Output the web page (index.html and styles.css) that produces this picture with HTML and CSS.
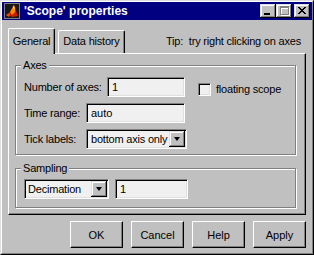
FILE: index.html
```html
<!DOCTYPE html>
<html lang="en">

<head>
    <meta charset="UTF-8">
    <title>'Scope' properties</title>
    <link rel="stylesheet" href="styles.css">
</head>

<body>
    <div class="window">
        <div class="frame">
            <!-- Caption bar -->
            <div class="titlebar">
                <svg class="app-icon" width="16" height="16" viewBox="0 0 16 16">
                    <rect x="0.5" y="0.5" width="15" height="15" fill="#181818" stroke="#808080"/>
                    <polygon points="2,12 6,9 10,2 12,8 14,13 9,14" fill="#c81e00"/>
                    <polygon points="6,9 10,2 11,9 8,12" fill="#ff8a00"/>
                    <polygon points="9,5 10,2 11,7" fill="#ffff40"/>
                    <polygon points="2,12 6,10 5,14" fill="#e85010"/>
                </svg>
                <span class="title">'Scope' properties</span>
                <div class="caption-buttons">
                    <span class="cbtn">
                        <svg width="16" height="14"><rect x="4" y="9" width="6" height="2" fill="#000"/></svg>
                    </span>
                    <span class="cbtn">
                        <svg width="16" height="14">
                            <path d="M5 3h9v9h-9z M6 5v6h7v-6z" fill="#fff" fill-rule="evenodd"/>
                            <path d="M4 2h9v9h-9z M5 4v6h7v-6z" fill="#808080" fill-rule="evenodd"/>
                        </svg>
                    </span>
                    <span class="cbtn close">
                        <svg width="16" height="14">
                            <path d="M4 3h2v1h-2z M10 3h2v1h-2z M5 4h2v1h-2z M9 4h2v1h-2z M6 5h4v1h-4z M7 6h2v1h-2z M6 7h4v1h-4z M5 8h2v1h-2z M9 8h2v1h-2z M4 9h2v1h-2z M10 9h2v1h-2z" fill="#000"/>
                        </svg>
                    </span>
                </div>
            </div>

            <div class="content">
                <div class="tabrow">
                    <div class="tab active">General</div>
                    <div class="tab">Data history</div>
                    <div class="tip">Tip:&nbsp; try right clicking on axes</div>
                </div>

                <div class="panel">
                    <fieldset class="group axes">
                        <legend>Axes</legend>
                        <div class="row">
                            <span class="lbl lbl-num">Number of axes:</span>
                            <input class="edit edit-num" type="text" value="1">
                            <span class="check-item">
                                <span class="check"></span>
                                <span>floating scope</span>
                            </span>
                        </div>
                        <div class="row">
                            <span class="lbl lbl-short">Time range:</span>
                            <input class="edit edit-time" type="text" value="auto">
                        </div>
                        <div class="row">
                            <span class="lbl lbl-short">Tick labels:</span>
                            <div class="combo combo-tick">
                                <span class="combo-text">bottom axis only</span>
                                <span class="arrow"></span>
                            </div>
                        </div>
                    </fieldset>

                    <fieldset class="group sampling">
                        <legend>Sampling</legend>
                        <div class="row">
                            <div class="combo combo-dec">
                                <span class="combo-text">Decimation</span>
                                <span class="arrow"></span>
                            </div>
                            <input class="edit edit-factor" type="text" value="1">
                        </div>
                    </fieldset>
                </div>

                <div class="buttons">
                    <button type="button">OK</button>
                    <button type="button">Cancel</button>
                    <button type="button">Help</button>
                    <button type="button">Apply</button>
                </div>
            </div>
        </div>
    </div>
</body>

</html>
```

FILE: styles.css
```css
/* Global styles */
* {
    padding: 0;
    margin: 0;
    box-sizing: border-box;
}

body {
    font-family: "Liberation Sans", Arial, sans-serif;
    font-size: 11px;
    letter-spacing: -0.2px;
    color: #000;
    background-color: #c0c0c0;
}

/* Window frame */
.window {
    width: 314px;
    height: 255px;
    border: 1px solid;
    border-color: #dfdfdf #000 #000 #dfdfdf;
    background-color: #c0c0c0;
}

.frame {
    height: 100%;
    border: 1px solid;
    border-color: #fff #808080 #808080 #fff;
}

/* Caption bar */
.titlebar {
    height: 18px;
    background-color: #000080;
    color: #fff;
    display: flex;
    align-items: center;
    padding: 0 2px;
}

.app-icon {
    display: block;
}

.title {
    margin-left: 4px;
    font-size: 12px;
    font-weight: bold;
    letter-spacing: 0;
}

.caption-buttons {
    margin-left: auto;
    display: flex;
}

.cbtn {
    width: 16px;
    height: 14px;
    background-color: #c0c0c0;
    box-shadow: inset -1px -1px #000, inset 1px 1px #dfdfdf, inset -2px -2px #808080, inset 2px 2px #fff;
}

.cbtn svg {
    display: block;
}

.cbtn.close {
    margin-left: 2px;
}

/* Dialog body */
.content {
    padding: 0 6px;
}

.tabrow {
    margin-top: 8px;
    height: 25px;
    display: flex;
    align-items: flex-end;
}

.tab {
    text-align: center;
    line-height: 13px;
    border: 1px solid;
    border-bottom: none;
    border-color: #fff #000 #000 #fff;
    border-radius: 2px 2px 0 0;
    box-shadow: inset -1px 0 #808080;
    background-color: #c0c0c0;
}

.tab.active {
    width: 47px;
    height: 26px;
    padding-top: 6px;
    margin-bottom: -1px;
    position: relative;
    z-index: 1;
}

.tab + .tab {
    width: 67px;
    height: 23px;
    padding-top: 4px;
    margin-left: 3px;
}

.tip {
    align-self: flex-start;
    line-height: 13px;
    padding-top: 7px;
    margin-left: auto;
    margin-right: 5px;
}

.panel {
    border: 1px solid;
    border-color: #fff #000 #000 #fff;
    box-shadow: inset -1px -1px #808080;
    padding: 5px 9px 6px 6px;
}

/* Etched group boxes */
.group {
    border: 1px solid #808080;
    box-shadow: inset 1px 1px #fff, 1px 1px #fff;
    padding: 5px 0 5px 8px;
    min-width: 0;
}

.group legend {
    line-height: 13px;
    padding: 0 2px;
    margin-left: -3px;
    background-color: #c0c0c0;
}

.sampling {
    margin-top: 7px;
    padding-top: 4px;
    padding-bottom: 8px;
}

.row {
    display: flex;
    align-items: center;
    height: 20px;
}

.row + .row {
    margin-top: 6px;
}

.lbl-num {
    width: 83px;
}

.lbl-short {
    width: 62px;
}

/* Sunken controls */
.edit {
    height: 20px;
    border: 1px solid;
    border-color: #808080 #fff #fff #808080;
    box-shadow: inset 1px 1px #000, inset -1px -1px #dfdfdf;
    background-color: #f0f0f0;
    font: inherit;
    padding: 0 4px;
    outline: none;
}

.edit-num {
    width: 78px;
}

.edit-time {
    width: 99px;
}

.edit-factor {
    width: 73px;
    margin-left: 6px;
}

.check-item {
    align-self: flex-start;
    margin-top: 6px;
    margin-left: 13px;
    display: flex;
    align-items: center;
    gap: 5px;
    line-height: 13px;
}

.check {
    width: 13px;
    height: 13px;
    border: 1px solid;
    border-color: #808080 #fff #fff #808080;
    box-shadow: inset 1px 1px #000, inset -1px -1px #dfdfdf;
    background-color: #f0f0f0;
}

.combo {
    height: 20px;
    display: flex;
    align-items: center;
    border: 1px solid;
    border-color: #808080 #fff #fff #808080;
    box-shadow: inset 1px 1px #000, inset -1px -1px #dfdfdf;
    background-color: #f0f0f0;
    padding: 1px;
}

.combo-tick {
    width: 101px;
}

.combo-tick .combo-text {
    padding-left: 3px;
}

.combo-dec {
    width: 85px;
}

.combo-dec .combo-text {
    padding-left: 2px;
}

.arrow {
    margin-left: auto;
    width: 16px;
    height: 16px;
    background-color: #c0c0c0;
    box-shadow: inset -1px -1px #000, inset 1px 1px #dfdfdf, inset -2px -2px #808080, inset 2px 2px #fff;
    display: flex;
    align-items: center;
    justify-content: center;
}

.arrow::after {
    content: "";
    border-left: 3.5px solid transparent;
    border-right: 3.5px solid transparent;
    border-top: 4px solid #000;
}

/* Push buttons */
.buttons {
    margin-top: 6px;
    display: flex;
    justify-content: flex-end;
    gap: 8px;
}

.buttons button {
    width: 53px;
    height: 27px;
    font: inherit;
    color: #000;
    background-color: #c0c0c0;
    border: 1px solid;
    border-color: #fff #000 #000 #fff;
    box-shadow: inset -1px -1px #808080;
}
```
